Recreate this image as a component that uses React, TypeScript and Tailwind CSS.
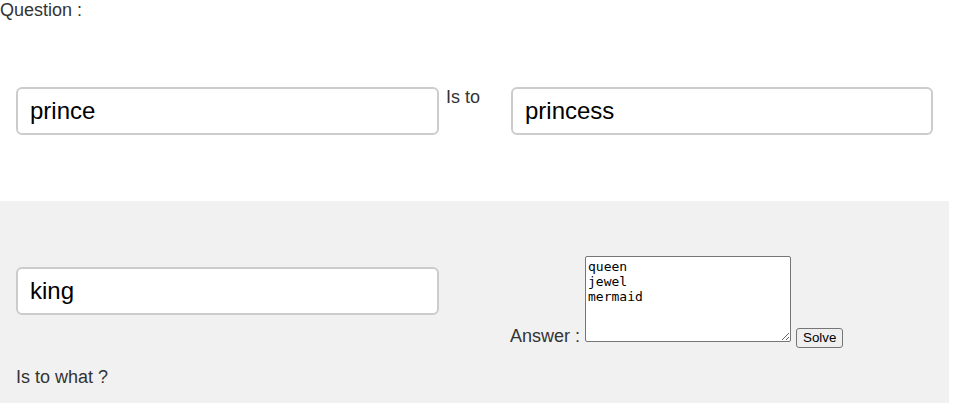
const inputCls =
  "h-[48px] border-2 border-[#ccc] rounded-[6px] bg-white px-[12px] text-[24px] text-black outline-none";

const App = () => {
  return (
    <div className="w-[970px] h-[417px] bg-white text-[#333] text-[18px] leading-[21px] font-['Liberation_Sans',Arial,sans-serif]">
      {/* Question */}
      <div>Question :</div>

      <div className="flex items-start mt-[66px] pl-[16px]">
        <input className={`${inputCls} w-[423px]`} defaultValue="prince" />
        <span className="ml-[7px] w-[65px]">Is to</span>
        <input className={`${inputCls} w-[422px]`} defaultValue="princess" />
      </div>

      {/* Answer panel */}
      <div className="flex mt-[66px] w-[949px] h-[202px] bg-[#f1f1f1]">
        <div className="w-[510px] pl-[16px] pt-[66px]">
          <input className={`${inputCls} w-[423px] block`} defaultValue="king" />
          <div className="mt-[52px]">Is to what ?</div>
        </div>
        <div className="pt-[55px]">
          Answer :{" "}
          <textarea
            className="inline-block align-baseline w-[206px] h-[86px] border border-[#767676] rounded-[2px] bg-white p-[2px] text-black text-[13px] leading-[15px] font-['DejaVu_Sans_Mono',monospace]"
            defaultValue={"queen\njewel\nmermaid"}
          />{" "}
          <button className="border border-[#767676] rounded-[3px] bg-[#efefef] px-[6px] py-[1px] text-[13.33px] leading-[16px] text-black font-['Liberation_Sans',Arial,sans-serif]">
            Solve
          </button>
        </div>
      </div>
    </div>
  );
};

export default App;
